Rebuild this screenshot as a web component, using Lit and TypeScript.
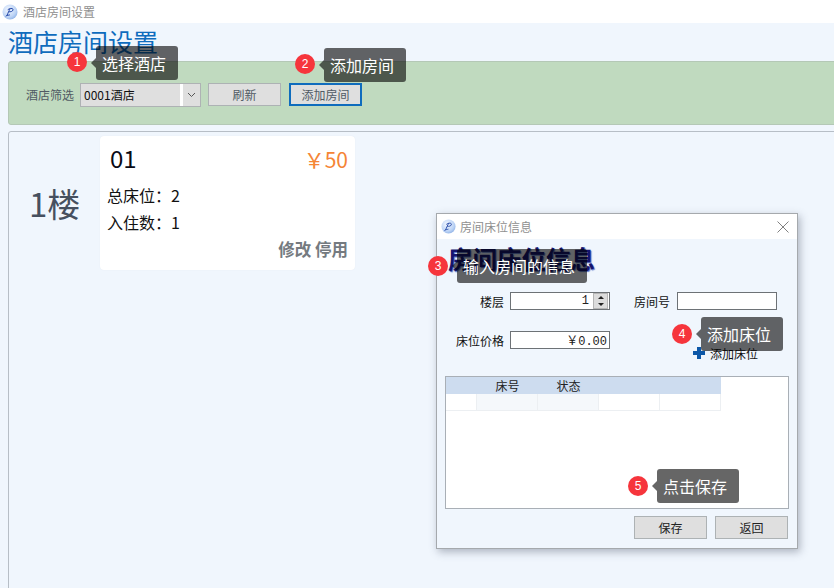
import { LitElement, html, css, svg } from "lit";
import { customElement } from "lit/decorators.js";

const logo = (s: number) => html`<svg width=${s} height=${s} viewBox="0 0 16 16">
  <defs><radialGradient id="lg" cx="0.4" cy="0.35" r="0.7"><stop offset="0" stop-color="#f4f8ff"/><stop offset="0.7" stop-color="#bcd3f5"/><stop offset="1" stop-color="#8fb2e6"/></radialGradient></defs>
  <circle cx="8" cy="8" r="7.5" fill="url(#lg)"/>
  ${svg`<path d="M5 11.5C6 9 7 6.5 8 5M6 5.5C8 3.8 11.5 4 11 6C10.6 7.6 8.5 8 7 7.8M4 12C5 11 6.5 11.4 7.5 11" fill="none" stroke="#2347a8" stroke-width="1" stroke-linecap="round"/>`}
</svg>`;

@customElement("app-root")
export class AppRoot extends LitElement {
  static styles = css`
    :host {
      display: block;
      position: relative;
      width: 834px;
      height: 588px;
      overflow: hidden;
      background: #f0f6fd;
      font-family: "Noto Sans CJK SC", "Liberation Sans", sans-serif;
    }
    .titlebar {
      height: 23px;
      background: #fff;
      display: flex;
      align-items: center;
      gap: 5px;
      padding-left: 2px;
      font-size: 12px;
      color: #8f8f8f;
    }
    .main { padding: 0 0 0 8px; }
    h1 {
      margin: 0;
      height: 38px;
      font-size: 25px;
      font-weight: 400;
      line-height: 36px;
      color: #0f6cbd;
      white-space: nowrap;
    }
    .filter {
      box-sizing: border-box;
      height: 64px;
      margin-right: -8px;
      background: #c0dabf;
      border: 1px solid #b4c8b6;
      border-radius: 3px;
      display: flex;
      align-items: center;
      padding: 3px 0 0 17px;
      font-size: 12px;
      color: #505a64;
    }
    .filter .lbl { width: 54px; }
    .select {
      width: 121px;
      height: 24px;
      box-sizing: border-box;
      border: 1px solid #aeb2b4;
      background: #dfdfdf;
      display: flex;
      align-items: center;
      color: #111;
      font-size: 12px;
      padding-left: 3px;
    }
    .select .t { flex: 1; }
    .select .w { width: 3px; height: 22px; background: #fff; }
    .select .a { width: 17px; display: flex; justify-content: center; }
    .btn {
      box-sizing: border-box;
      width: 73px;
      height: 23px;
      margin-left: 7px;
      border: 1px solid #adb2b4;
      background: #dfdfdf;
      display: flex;
      align-items: center;
      justify-content: center;
      font-size: 12px;
      color: #505a64;
    }
    .btn.focus { border: 2px solid #0f6cbd; margin-left: 8px; }
    .rooms {
      margin-top: 6px;
      height: 470px;
      margin-right: -8px;
      border: 1px solid #b7bec6;
      border-radius: 3px;
      display: flex;
      padding: 4px 0 0 20px;
      box-sizing: border-box;
      align-items: flex-start;
    }
    .floor {
      width: 71px;
      margin-top: 43px;
      font-size: 33px;
      line-height: 48px;
      color: #46505f;
      white-space: nowrap;
    }
    .card {
      width: 255px;
      height: 134px;
      box-sizing: border-box;
      background: #fff;
      border-radius: 4px;
      box-shadow: 0 0 1px #dfe5ec;
      padding: 1px 7px 0 7px;
      color: #111;
    }
    .card .top { display: flex; justify-content: space-between; height: 40px; margin-bottom: 5px; align-items: center; padding-left: 3px; }
    .card .no { font-size: 24px; color: #0a0a14; }
    .card .price { font-size: 21px; color: #f58536; padding-top: 3px; }
    .card .row { font-size: 16px; height: 27px; line-height: 27px; white-space: nowrap; }
    .card .acts { text-align: right; font-size: 16.5px; font-weight: 700; color: #747a80; line-height: 27px; white-space: nowrap; }

    .dialog {
      position: absolute;
      left: 436px;
      top: 213px;
      width: 362px;
      height: 336px;
      box-sizing: border-box;
      border: 1px solid #a5a9ad;
      background: #f0f6fd;
      box-shadow: 2px 3px 8px rgba(90, 100, 120, 0.45);
      display: flex;
      flex-direction: column;
      font-size: 12px;
      color: #222;
    }
    .dbar {
      height: 25px;
      background: #fff;
      display: flex;
      align-items: center;
      padding-left: 4px;
      gap: 4px;
      color: #8f8f8f;
      font-size: 12px;
      flex: none;
    }
    .dbar .x { margin-left: auto; margin-right: 8px; display: flex; }
    .dtitle {
      margin: 2px 0 0 11px;
      height: 39px;
      font-weight: 700;
      font-size: 24.5px;
      line-height: 36px;
      color: #15156e;
      text-shadow: 1px 1px 1px #5a78c8;
      white-space: nowrap;
    }
    .form { display: grid; grid-template-columns: 73px 100px 67px 100px; row-gap: 21px; margin-top: 12px; align-items: center; }
    .form .l { text-align: right; padding-right: 6px; white-space: nowrap; color: #111; }
    .form .l.mid { padding-right: 7px; }
    .input {
      height: 18px;
      box-sizing: border-box;
      border: 1px solid #6d7276;
      background: #fff;
      display: flex;
      align-items: center;
      justify-content: flex-end;
      font-family: "Liberation Mono", "Noto Sans CJK SC", monospace;
      font-size: 12px;
      padding-right: 2px;
    }
    .input.num { padding-right: 1px; }
    .spin { display: flex; flex-direction: column; width: 15px; height: 16px; margin-left: 4px; background: #dcdcdc; border: 1px solid #b5b5b5; box-sizing: border-box; align-items: center; justify-content: space-around; }
    .up { width: 0; height: 0; border: 3px solid transparent; border-top: 0; border-bottom: 3px solid #222; }
    .dn { width: 0; height: 0; border: 3px solid transparent; border-bottom: 0; border-top: 3px solid #222; }
    .addbed { display: flex; align-items: center; gap: 5px; margin: -4px 0 0 256px; height: 16px; white-space: nowrap; color: #111; }
    .table {
      margin: 15px 8px 0 8px;
      height: 133px;
      border: 1px solid #a9afb6;
      background: #fff;
      box-sizing: border-box;
      flex: none;
    }
    .thead, .tbody { display: grid; grid-template-columns: 31px repeat(4, 61px); width: 275px; }
    .thead { height: 17px; background: #cddcef; line-height: 17px; text-align: center; }
    .tbody { height: 17px; }
    .tbody div { border-right: 1px solid #eceff2; border-bottom: 1px solid #eceff2; background: #fff; }
    .tbody .s { background: #f5f8fb; }
    .foot { display: flex; justify-content: flex-end; gap: 8px; margin: 7px 9px 0 0; }
    .foot .btn { margin: 0; color: #222; }

    .badge {
      position: absolute;
      width: 20px;
      height: 20px;
      border-radius: 50%;
      background: #f6353c;
      color: #fff;
      font: 12px "Liberation Sans", sans-serif;
      display: flex;
      align-items: center;
      justify-content: center;
    }
    .tip {
      position: absolute;
      height: 34px;
      border-radius: 3px;
      color: #fff;
      font-size: 16px;
      display: flex;
      align-items: center;
      box-sizing: border-box;
      padding-left: 6px;
      white-space: nowrap;
      background: rgba(0, 0, 0, 0.6);
    }
    .tip::before {
      content: "";
      position: absolute;
      left: -5px;
      top: 12px;
      border: 5px solid transparent;
      border-left: 0;
      border-right-color: rgba(0, 0, 0, 0.6);
    }
  `;

  private tip(n: number, bx: number, by: number, x: number, y: number, w: number, text: string) {
    return html`<div class="badge" style="left:${bx}px;top:${by}px">${n}</div>
      <div class="tip" style="left:${x}px;top:${y}px;width:${w}px">${text}</div>`;
  }

  render() {
    return html`
      <div class="titlebar">${logo(16)}<span>酒店房间设置</span></div>
      <div class="main">
        <h1>酒店房间设置</h1>
        <div class="filter">
          <span class="lbl">酒店筛选</span>
          <div class="select">
            <span class="t">0001酒店</span><span class="w"></span>
            <span class="a"><svg width="9" height="6" viewBox="0 0 9 6"><path d="M1 1l3.5 3.5L8 1" fill="none" stroke="#555" stroke-width="1"/></svg></span>
          </div>
          <div class="btn">刷新</div>
          <div class="btn focus">添加房间</div>
        </div>
        <div class="rooms">
          <div class="floor">1楼</div>
          <div class="card">
            <div class="top"><span class="no">01</span><span class="price">￥50</span></div>
            <div class="row">总床位：2</div>
            <div class="row">入住数：1</div>
            <div class="acts">修改 停用</div>
          </div>
        </div>
      </div>

      <div class="dialog">
        <div class="dbar">${logo(15)}<span>房间床位信息</span>
          <span class="x"><svg width="12" height="12" viewBox="0 0 12 12"><path d="M.5.5l11 11M11.5.5l-11 11" stroke="#808080" fill="none"/></svg></span>
        </div>
        <div class="dtitle">房间床位信息</div>
        <div class="form">
          <div class="l">楼层</div>
          <div class="input num">1<span class="spin"><i class="up"></i><i class="dn"></i></span></div>
          <div class="l mid">房间号</div>
          <div class="input"></div>
          <div class="l">床位价格</div>
          <div class="input">￥0.00</div>
        </div>
        <div class="addbed">
          <svg width="12" height="12" viewBox="0 0 12 12"><path d="M4 0h4v4h4v4H8v4H4V8H0V4h4z" fill="#0d58a8"/></svg>
          <span>添加床位</span>
        </div>
        <div class="table">
          <div class="thead"><div></div><div>床号</div><div>状态</div><div></div><div></div></div>
          <div class="tbody"><div></div><div class="s"></div><div class="s"></div><div></div><div></div></div>
        </div>
        <div class="foot"><div class="btn">保存</div><div class="btn">返回</div></div>
      </div>

      ${this.tip(1, 67, 52, 96, 46, 82, "选择酒店")}
      ${this.tip(2, 295, 54, 324, 48, 82, "添加房间")}
      ${this.tip(3, 428, 256, 457, 249, 130, "输入房间的信息")}
      ${this.tip(4, 672, 324, 701, 317, 82, "添加床位")}
      ${this.tip(5, 628, 476, 657, 469, 82, "点击保存")}
    `;
  }
}
